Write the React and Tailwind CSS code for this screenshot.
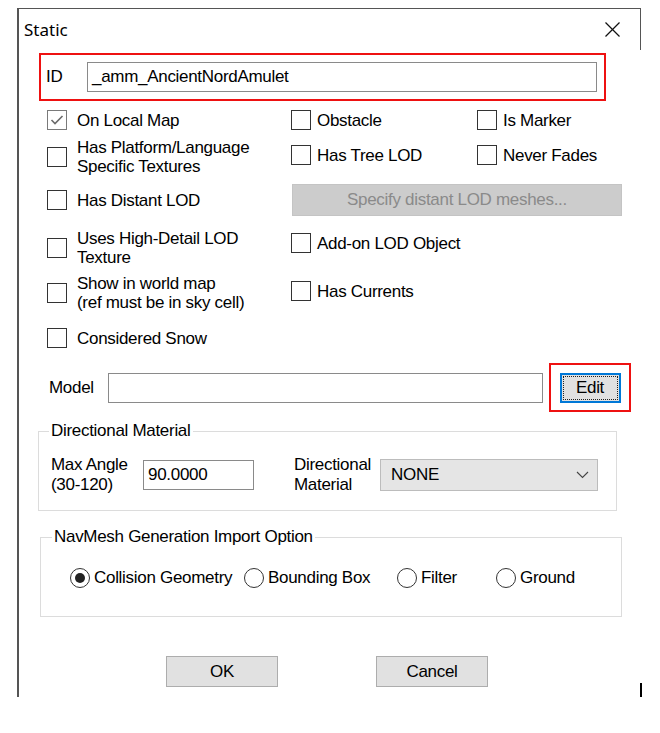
import React from "react";

const body = { fontFamily: '"Liberation Sans", Arial, sans-serif' };

function Box({ checked = false, gap = "gap-[6px]", children, className = "" }) {
  return (
    <div className={`flex items-center ${gap} ${className}`}>
      <div
        className={`w-[20px] h-[20px] shrink-0 bg-white border-[1.5px] flex items-center justify-center ${
          checked ? "border-[#7a7a7a]" : "border-[#333333]"
        }`}
      >
        {checked && (
          <svg width="14" height="12" viewBox="0 0 14 12">
            <polyline points="1.5,6 5,9.5 12.5,2" fill="none" stroke="#6b6b6b" strokeWidth="1.6" />
          </svg>
        )}
      </div>
      <div className="leading-[19px]">{children}</div>
    </div>
  );
}

function Radio({ checked = false, children, className = "" }) {
  return (
    <div className={`flex items-center gap-[4px] ${className}`}>
      <div className="w-[20px] h-[20px] shrink-0 rounded-full border-[1.5px] border-[#333333] bg-white flex items-center justify-center">
        {checked && <div className="w-[10px] h-[10px] rounded-full bg-[#222222]" />}
      </div>
      <div className="leading-[20px]">{children}</div>
    </div>
  );
}

export default function App() {
  return (
    <div
      className="relative w-[660px] h-[733px] bg-white overflow-hidden text-black text-[17px] tracking-[-0.3px]"
      style={body}
    >
      <div className="absolute left-[640px] top-[683px] w-[2px] h-[14px] bg-black" />
      <div className="ml-[17px] mt-[8px] w-[624px] h-[689px] border-l-2 border-t border-[#555555]">
        {/* title bar */}
        <div className="h-[41px] border-r border-[#555555] flex items-center justify-between pl-[5px] pr-[20px]">
          <span
            className="text-[17px] tracking-normal text-black"
            style={{ fontFamily: '"Noto Sans", "Open Sans", sans-serif' }}
          >
            Static
          </span>
          <svg width="15" height="15" viewBox="0 0 15 15">
            <line x1="0.5" y1="0.5" x2="14.5" y2="14.5" stroke="#111" strokeWidth="1.2" />
            <line x1="14.5" y1="0.5" x2="0.5" y2="14.5" stroke="#111" strokeWidth="1.2" />
          </svg>
        </div>

        {/* ID */}
        <div className="ml-[20px] mt-[3px] w-[567px] h-[48px] border-2 border-[#ee1111] flex items-center pl-[5px]">
          <span className="w-[41px]">ID</span>
          <div className="w-[510px] h-[30px] border border-[#8a8a8a] bg-white flex items-center pl-[4px]">
            _amm_AncientNordAmulet
          </div>
        </div>

        {/* checkboxes */}
        <div className="ml-[28px] mt-[9px]">
          <div className="flex items-center h-[20px]">
            <Box checked gap="gap-[10px]" className="w-[244px]">On Local Map</Box>
            <Box className="w-[186px]">Obstacle</Box>
            <Box>Is Marker</Box>
          </div>
          <div className="flex items-center h-[40px] mt-[7px]">
            <Box gap="gap-[10px]" className="w-[244px]">
              Has Platform/Language
              <br />
              Specific Textures
            </Box>
            <Box className="w-[186px] mb-[4px]">Has Tree LOD</Box>
            <Box className="mb-[4px]">Never Fades</Box>
          </div>
          <div className="flex items-center h-[32px] mt-[7px]">
            <Box gap="gap-[10px]" className="w-[245px]">Has Distant LOD</Box>
            <div className="w-[330px] h-[32px] bg-[#cccccc] border border-[#c4c4c4] flex items-center justify-center text-[#8a8a8a]">
              Specify distant LOD meshes...
            </div>
          </div>
          <div className="flex items-center h-[38px] mt-[13px]">
            <Box gap="gap-[10px]" className="w-[244px]">
              Uses High-Detail LOD
              <br />
              Texture
            </Box>
            <Box className="mb-[10px]">Add-on LOD Object</Box>
          </div>
          <div className="flex items-center h-[38px] mt-[7px]">
            <Box gap="gap-[10px]" className="w-[244px]">
              Show in world map
              <br />
              (ref must be in sky cell)
            </Box>
            <Box className="mb-[4px]">Has Currents</Box>
          </div>
          <div className="flex items-center h-[20px] mt-[16px]">
            <Box gap="gap-[10px]">Considered Snow</Box>
          </div>
        </div>

        {/* model */}
        <div className="flex items-center ml-[30px] mt-[15px] h-[49px]">
          <span className="w-[59px]">Model</span>
          <div className="w-[435px] h-[30px] border border-[#8a8a8a] bg-white" />
          <div className="ml-[6px] w-[82px] h-[49px] border-2 border-[#ee1111] flex items-center justify-center">
            <div className="w-[61px] h-[30px] border-2 border-[#0078d7] bg-[#e1e1e1] p-[1px]">
              <div className="w-full h-full border border-dotted border-[#222222] flex items-center justify-center">
                Edit
              </div>
            </div>
          </div>
        </div>

        {/* directional material */}
        <fieldset className="ml-[19px] mt-[9px] w-[579px] border border-[#dcdcdc] p-0 pb-[15px]">
          <legend className="ml-[10px] px-[2px] leading-[20px]">Directional Material</legend>
          <div className="flex items-center h-[40px] mt-[14px] pl-[12px]">
            <div className="w-[92px] leading-[20px]">
              Max Angle
              <br />
              (30-120)
            </div>
            <div className="w-[111px] h-[30px] border border-[#8a8a8a] bg-white flex items-center pl-[4px]">
              90.0000
            </div>
            <div className="ml-[40px] w-[86px] leading-[20px]">
              Directional
              <br />
              Material
            </div>
            <div className="w-[218px] h-[32px] border border-[#bcbcbc] bg-[#e5e5e5] flex items-center justify-between pl-[10px] pr-[8px]">
              <span>NONE</span>
              <svg width="13" height="8" viewBox="0 0 13 8">
                <polyline points="1,1 6.5,6.5 12,1" fill="none" stroke="#444" strokeWidth="1.1" />
              </svg>
            </div>
          </div>
        </fieldset>

        {/* navmesh */}
        <fieldset className="ml-[21px] mt-[16px] w-[582px] border border-[#dcdcdc] p-0 pb-[28px]">
          <legend className="ml-[11px] px-[2px] leading-[20px]">NavMesh Generation Import Option</legend>
          <div className="flex items-center h-[20px] mt-[21px] pl-[29px]">
            <Radio checked className="w-[174px]">Collision Geometry</Radio>
            <Radio className="w-[153px]">Bounding Box</Radio>
            <Radio className="w-[99px]">Filter</Radio>
            <Radio>Ground</Radio>
          </div>
        </fieldset>

        {/* buttons */}
        <div className="flex mt-[39px] ml-[147px] gap-[98px]">
          <div className="w-[112px] h-[31px] bg-[#e1e1e1] border border-[#adadad] flex items-center justify-center">
            OK
          </div>
          <div className="w-[112px] h-[31px] bg-[#e1e1e1] border border-[#adadad] flex items-center justify-center">
            Cancel
          </div>
        </div>
      </div>
    </div>
  );
}
